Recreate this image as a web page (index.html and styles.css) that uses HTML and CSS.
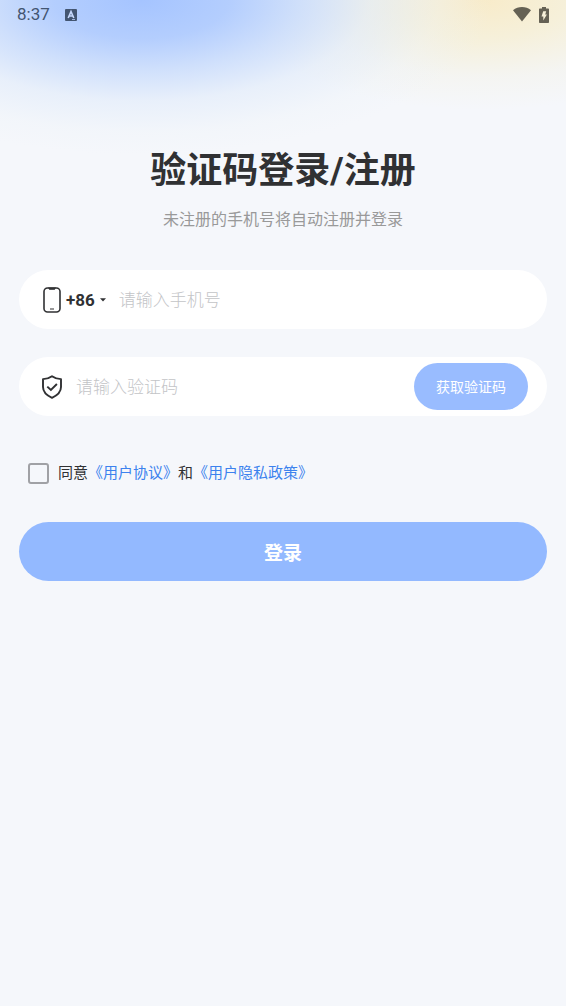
FILE: index.html
```html
<!DOCTYPE html>
<html lang="zh-CN">
<head>
<meta charset="utf-8">
<meta name="viewport" content="width=device-width, initial-scale=1">
<title>验证码登录/注册</title>
<link rel="stylesheet" href="styles.css">
</head>
<body>
<header class="status">
  <span class="status-time">8:37</span>
  <svg class="status-app" viewBox="0 0 12 12" aria-hidden="true"><rect width="12" height="12" rx="1" fill="currentColor"/><path d="M3.2 9 6 2.6 8.8 9M4.3 7h3.4" fill="none" stroke="#c6d8fc" stroke-width="1.6"/><path d="M7 10.5h3" stroke="#bdd1fa" stroke-width=".8"/></svg>
  <span class="status-right">
    <svg class="status-wifi" viewBox="0 0 18 15" aria-hidden="true"><path d="M0 3.2C5-1 13-1 18 3.2L9 14.6Z" fill="currentColor"/></svg>
    <svg class="status-battery" viewBox="0 0 10 16" aria-hidden="true"><path d="M3 0h4v1.6h2c.6 0 1 .4 1 1V15c0 .6-.4 1-1 1H1c-.6 0-1-.4-1-1V2.600c0-.6.4-1 1-1h2Z" fill="currentColor"/><path d="M4.200 4.200h3L6.200 7.600h1.700L4.300 13.400V9.400H2.500Z" fill="#f6efd8"/></svg>
  </span>
</header>
<main class="login">
  <h1 class="title">验证码登录/注册</h1>
  <p class="subtitle">未注册的手机号将自动注册并登录</p>
  <form class="form">
    <div class="field">
      <button class="area" type="button" aria-label="国家区号 +86">
        <svg class="icon-phone" viewBox="0 0 18 26" aria-hidden="true"><rect x="1" y="1" width="16" height="24" rx="3.500" fill="none" stroke="currentColor" stroke-width="1.600"/><path d="M6 1.200h6l-.6 1h-4.800ZM7 22h4" fill="currentColor" stroke="currentColor" stroke-width="1.200"/></svg>
        <span class="area-code">+86</span>
        <svg class="icon-caret" viewBox="0 0 6 4" aria-hidden="true"><path d="M0 .3h6L3 3.600Z" fill="currentColor"/></svg>
      </button>
      <input class="input" type="tel" placeholder="请输入手机号" aria-label="手机号">
    </div>
    <div class="field field-code">
      <svg class="icon-shield" viewBox="0 0 22 24" aria-hidden="true"><path d="M11 1.200C13.500 3 16.500 4 20 4.100V12c0 5-4 8.500-9 10.800C6 20.500 2 17 2 12V4.100C5.500 4 8.500 3 11 1.200Z" fill="none" stroke="currentColor" stroke-width="1.900" stroke-linejoin="round"/><path d="m6.300 11.600 3.600 3.400 6-6" fill="none" stroke="currentColor" stroke-width="1.900"/></svg>
      <input class="input" type="text" inputmode="numeric" placeholder="请输入验证码" aria-label="验证码">
      <button class="send" type="button">获取验证码</button>
    </div>
    <div class="agree">
      <input class="check" type="checkbox" id="agree">
      <p class="agree-text"><label for="agree">同意</label><a class="link" href="#terms">《用户协议》</a>和<a class="link" href="#privacy">《用户隐私政策》</a></p>
    </div>
    <button class="submit" type="submit">登录</button>
  </form>
</main>
</body>
</html>
```
FILE: styles.css
```css
* {
  box-sizing: border-box;
}

body {
  margin: 0;
  min-height: 100vh;
  color: #303133;
  font-family: Roboto, "Noto Sans CJK SC", sans-serif;
  background:
    radial-gradient(ellipse 350px 155px at 25% 0, #a5c4ff 0%, #b1ccfef5 25%, #c6dafccc 45%, #dde9fa88 65%, #ebf2f944 85%, #f5f7fb00 100%),
    radial-gradient(ellipse 250px 110px at 85% 0, #f8ebc9 0%, #f6efd5dd 35%, #f4f2e777 70%, #f5f7fb00 100%),
    #f5f7fb;
  background-repeat: no-repeat;
}

button,
input {
  font-family: inherit;
}

button {
  padding: 0;
  border: 0;
  color: inherit;
  background: none;
  cursor: pointer;
}

svg {
  display: block;
  flex: none;
}

.status {
  display: flex;
  align-items: center;
  gap: 15px;
  height: 29px;
  padding: 0 17px;
  color: #435571;
}

.status-time {
  font-size: 17px;
  line-height: 29px;
}

.status-app {
  width: 12px;
  height: 12px;
}

.status-right {
  display: flex;
  align-items: center;
  gap: 8px;
  margin-left: auto;
  color: #656154;
}

.status-wifi {
  width: 18px;
  height: 15px;
}

.status-battery {
  width: 10px;
  height: 16px;
}

.login {
  padding: 116px 19px 40px;
}

.title {
  margin: 0;
  font-size: 36px;
  line-height: 52px;
  font-weight: 700;
  text-align: center;
}

.subtitle {
  margin: 11px 0 38px;
  font-size: 16px;
  line-height: 24px;
  color: #999;
  text-align: center;
}

.field {
  display: flex;
  align-items: center;
  gap: 13px;
  height: 59px;
  margin-bottom: 28px;
  padding: 0 19px 0 24px;
  border-radius: 30px;
  background: #fff;
}

.field-code {
  padding-left: 22px;
}

.area {
  display: flex;
  align-items: center;
  gap: 5px;
}

.area-code {
  font-size: 17px;
  line-height: 24px;
  font-weight: 700;
}

.icon-phone {
  width: 18px;
  height: 26px;
}

.icon-caret {
  width: 6px;
  height: 4px;
}

.icon-shield {
  width: 22px;
  height: 24px;
}

.input {
  flex: 1;
  min-width: 0;
  height: 40px;
  padding: 0;
  border: 0;
  outline: 0;
  font-size: 17px;
  color: #303133;
  background: none;
}

.input::placeholder {
  color: #c3c4c7;
  font-weight: 300;
  opacity: 1;
}

.send {
  height: 47px;
  padding: 0 22px 1px;
  border-radius: 24px;
  font-size: 14px;
  color: #fff;
  background: #99bcff;
}

.agree {
  display: flex;
  align-items: center;
  gap: 9px;
  margin: 45px 0 37px;
  padding-left: 9px;
}

.check {
  appearance: none;
  width: 21px;
  height: 21px;
  margin: 0;
  border: 2px solid #a0a1a5;
  border-radius: 3px;
}

.check:checked {
  border-color: #93b9ff;
  background: #93b9ff;
}

.agree-text {
  margin: 0;
  font-size: 15px;
  line-height: 24px;
}

.link {
  color: #3c82ee;
  text-decoration: none;
}

.submit {
  display: block;
  width: 100%;
  height: 59px;
  border-radius: 30px;
  font-size: 19px;
  font-weight: 700;
  color: #fff;
  background: #93b9ff;
}
```
